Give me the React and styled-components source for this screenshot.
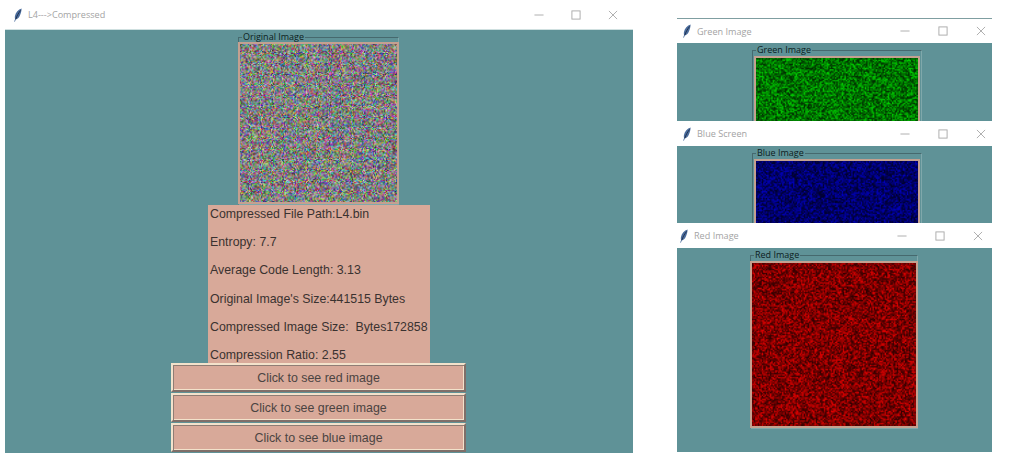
import React, { useEffect, useRef } from "react";
import styled, { createGlobalStyle } from "styled-components";

const GlobalStyle = createGlobalStyle`
  html, body {
    margin: 0;
    padding: 0;
    background: #fff;
    overflow: hidden;
  }
`;

// small seeded generator so the noise is the same on each load
function makeRandom(seed) {
  let s = seed;
  return () => {
    s = (s * 1664525 + 1013904223) % 4294967296;
    return s / 4294967296;
  };
}

function NoiseImage({ mode, width, height, seed, gap, pad }) {
  const ref = useRef(null);
  const grain = mode === "rgb" ? 1.1 : 1.35;

  useEffect(() => {
    const canvas = ref.current;
    const ctx = canvas.getContext("2d");
    const img = ctx.createImageData(canvas.width, canvas.height);
    const rand = makeRandom(seed);
    for (let i = 0; i < img.data.length; i += 4) {
      let r = 0;
      let g = 0;
      let b = 0;
      if (mode === "rgb") {
        r = 35 + rand() * 185;
        g = 35 + rand() * 185;
        b = 35 + rand() * 185;
      } else {
        const v = 50 + Math.pow(rand(), 1.25) * 195;
        if (mode === "red") r = v * 0.92;
        if (mode === "green") g = v * 0.85;
        if (mode === "blue") b = v * 0.78;
      }
      img.data[i] = r;
      img.data[i + 1] = g;
      img.data[i + 2] = b;
      img.data[i + 3] = 255;
    }
    ctx.putImageData(img, 0, 0);
  }, [mode, seed]);

  return (
    <Noise
      ref={ref}
      width={Math.round(width / grain)}
      height={Math.round(height / grain)}
      $w={width}
      $h={height}
      $gap={gap}
      $pad={pad}
    />
  );
}

function Feather() {
  return (
    <FeatherSvg viewBox="0 0 10 14">
      <path d="M8.6 0.6C5.4 1.6 2.6 4.4 1.9 8.2c-0.2 1.2-0.1 2.2 0.2 2.9L1.2 13.6l0.7 0.2 0.9-2.4c1.6-0.2 3.1-1.6 4-3.6C7.8 5.8 8.6 3 8.6 0.6z" fill="#4a6c9c" />
      <path d="M7.6 2.4C5.6 5 3.8 8 2.8 11.2" stroke="#16233c" strokeWidth="0.8" fill="none" />
    </FeatherSvg>
  );
}

function Controls({ spacing }) {
  return (
    <ControlRow $spacing={spacing}>
      <ControlIcon viewBox="0 0 11 11">
        <path d="M0.5 5.5h10" />
      </ControlIcon>
      <ControlIcon viewBox="0 0 11 11">
        <rect x="1" y="1" width="9" height="9" />
      </ControlIcon>
      <ControlIcon viewBox="0 0 11 11">
        <path d="M1 1l9 9M10 1l-9 9" />
      </ControlIcon>
    </ControlRow>
  );
}

function TitleBar({ title, height, left, right, spacing }) {
  return (
    <Bar $height={height} $left={left} $right={right}>
      <Feather />
      <BarTitle>{title}</BarTitle>
      <Controls spacing={spacing} />
    </Bar>
  );
}

function ChannelWindow({ title, label, mode, seed, barHeight, bodyHeight, imageWidth, imageHeight, pad, offset, barLeft, barRight }) {
  return (
    <>
      <TitleBar title={title} height={barHeight} left={barLeft} right={barRight} spacing={28} />
      <ChannelBody $height={bodyHeight} $offset={offset}>
        <ImageFrame>
          <FrameLabel>{label}</FrameLabel>
          <NoiseImage mode={mode} width={imageWidth} height={imageHeight} seed={seed} gap={1} pad={pad} />
        </ImageFrame>
      </ChannelBody>
    </>
  );
}

const stats = [
  "Compressed File Path:L4.bin",
  "Entropy: 7.7",
  "Average Code Length: 3.13",
  "Original Image's Size:441515 Bytes",
  "Compressed Image Size:  Bytes172858",
  "Compression Ratio: 2.55",
];

const buttons = ["Click to see red image", "Click to see green image", "Click to see blue image"];

export default function App() {
  return (
    <>
      <GlobalStyle />
      <Screen>
        <MainWindow>
          <TitleBar title="L4--->Compressed" height={29} left={8} right={15} spacing={27} />
          <MainBody>
            <ImageFrame>
              <FrameLabel>Original Image</FrameLabel>
              <NoiseImage mode="rgb" width={159} height={160} seed={11} gap={0} pad={0} />
            </ImageFrame>
            <InfoPanel>
              {stats.map((line) => (
                <InfoLine key={line}>{line}</InfoLine>
              ))}
            </InfoPanel>
            <ButtonStack>
              {buttons.map((label) => (
                <RaisedButton key={label}>{label}</RaisedButton>
              ))}
            </ButtonStack>
          </MainBody>
        </MainWindow>

        <SideColumn>
          <ChannelWindow title="Green Image" label="Green Image" mode="green" seed={21} barHeight={24} bodyHeight={78} imageWidth={164} imageHeight={166} pad={2} offset={6} barLeft={5} barRight={6} />
          <ChannelWindow title="Blue Screen" label="Blue Image" mode="blue" seed={33} barHeight={25} bodyHeight={77} imageWidth={164} imageHeight={166} pad={2} offset={6} barLeft={5} barRight={6} />
          <ChannelWindow title="Red Image" label="Red Image" mode="red" seed={47} barHeight={25} bodyHeight={204} imageWidth={166} imageHeight={165} pad={0} offset={0} barLeft={2} barRight={9} />
        </SideColumn>
      </Screen>
    </>
  );
}

const Screen = styled.div`
  display: flex;
  align-items: flex-start;
  width: 1012px;
  height: 462px;
  padding-left: 5px;
  box-sizing: border-box;
  background: #fff;
`;

const MainWindow = styled.div`
  display: flex;
  flex-direction: column;
  width: 628px;
  height: 453px;
`;

const Bar = styled.div`
  display: flex;
  align-items: center;
  flex: none;
  height: ${(p) => p.$height}px;
  padding: 0 ${(p) => p.$right}px 0 ${(p) => p.$left}px;
  background: #fff;
  box-sizing: border-box;
  font-family: "Open Sans", sans-serif;
`;

const FeatherSvg = styled.svg`
  width: 10px;
  height: 14px;
  flex: none;
`;

const BarTitle = styled.span`
  margin-left: 5px;
  font-size: 9.1px;
  color: #a3a3a3;
  flex: 1;
`;

const ControlRow = styled.div`
  display: flex;
  gap: ${(p) => p.$spacing}px;
  align-items: center;
`;

const ControlIcon = styled.svg`
  width: 10px;
  height: 10px;
  fill: none;
  stroke: #a8a8a8;
  stroke-width: 1;
`;

const MainBody = styled.div`
  display: flex;
  flex-direction: column;
  align-items: center;
  flex: 1;
  min-height: 0;
  overflow: hidden;
  background: #5f9297;
  border-top: 1px solid #cfe0e0;
`;

const ImageFrame = styled.fieldset`
  margin: 1px 1px 0 0;
  padding: 0;
  border: 1px solid #46696e;
  border-bottom-color: #7fa8ab;
  border-right-color: #7fa8ab;
  flex: none;
  min-width: 0;
`;

const FrameLabel = styled.legend`
  margin-left: 3px;
  padding: 0 1px;
  font-family: "Open Sans", sans-serif;
  font-size: 9px;
  line-height: 12px;
  color: #0c1c20;
`;

const Noise = styled.canvas`
  display: block;
  width: ${(p) => p.$w}px;
  height: ${(p) => p.$h}px;
  margin: ${(p) => p.$gap}px ${(p) => p.$pad}px 1px;
  outline: 2px solid #c4a090;
  outline-offset: -1px;
  filter: blur(0.35px);
`;

const InfoPanel = styled.div`
  flex: none;
  box-sizing: border-box;
  width: 222px;
  height: 158px;
  padding: 2px 2px 0;
  background: #d8a999;
  overflow: hidden;
`;

const InfoLine = styled.div`
  height: 28.2px;
  font-family: "Liberation Sans", Arial, sans-serif;
  font-size: 12.35px;
  line-height: 14px;
  color: #3a3230;
  white-space: pre;
`;

const ButtonStack = styled.div`
  display: flex;
  flex-direction: column;
  gap: 1px;
  flex: none;
  margin-right: 1px;
`;

const RaisedButton = styled.button`
  box-sizing: border-box;
  width: 295px;
  height: 29px;
  padding: 0;
  background: #d8a999;
  border: 2px solid;
  border-color: #f3e2cb #7f6f69 #7f6f69 #f3e2cb;
  box-shadow: inset 1px 1px 0 #8f7d75, inset -1px -1px 0 #f3e2cb;
  font-family: "Liberation Sans", Arial, sans-serif;
  font-size: 12.4px;
  color: #4b4442;
`;

const SideColumn = styled.div`
  display: flex;
  flex-direction: column;
  width: 315px;
  margin-left: 44px;
  margin-top: 18px;
  border-top: 1px solid #7f9ea1;
`;

const ChannelBody = styled.div`
  display: flex;
  flex-direction: column;
  align-items: center;
  flex: none;
  height: ${(p) => p.$height}px;
  padding-left: ${(p) => p.$offset}px;
  box-sizing: border-box;
  overflow: hidden;
  background: #5f9297;
`;
